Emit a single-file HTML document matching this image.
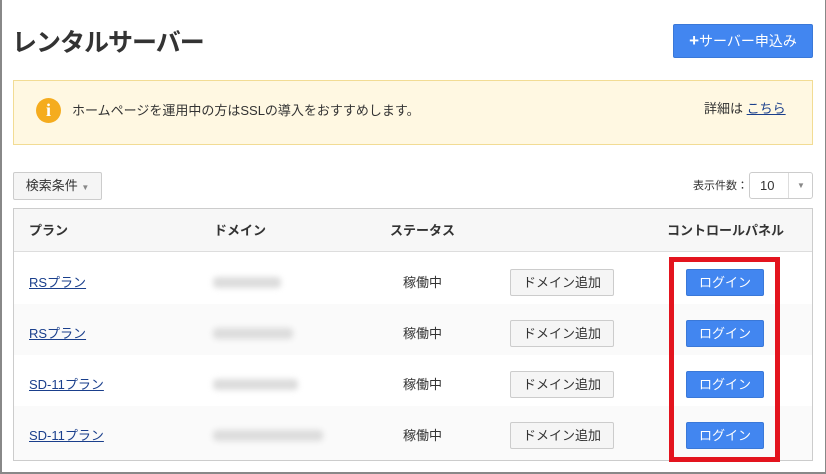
<!DOCTYPE html>
<html><head><meta charset="utf-8"><style>
*{box-sizing:border-box;margin:0;padding:0}
body{width:826px;height:474px;background:#fff;font-family:"Liberation Sans","Noto Sans CJK JP",sans-serif;color:#333;position:relative;overflow:hidden;font-size:13px;line-height:1.2}
.frame{position:absolute;left:0;top:0;width:826px;height:474px;border-left:2px solid #888;border-right:1px solid #888;border-bottom:2px solid #888}
.a{position:absolute}
h1{position:absolute;left:12px;top:28px;font-size:25px;font-weight:bold;color:#333;letter-spacing:-1px;line-height:1.2}
.apply{left:673px;top:24px;width:140px;height:34px;background:#4286f0;border:1px solid #3a78d8;color:#fff;font-size:14px;text-align:center;line-height:32px;border-radius:2px}
.alert{left:13px;top:80px;width:800px;height:65px;background:#fff8e2;border:1px solid #f2dc94}
.ic{left:36px;top:98px;width:25px;height:25px;border-radius:50%;background:#f5ac1e;color:#fff;font-family:"Liberation Serif",serif;font-weight:bold;font-size:18px;text-align:center;line-height:25px}
.btn{background:#f5f5f5;border:1px solid #ccc;border-radius:2px;color:#333;text-align:center}
.tbl{left:13px;top:208px;width:800px;height:253px;border:1px solid #ccc}
.hdr{left:14px;top:209px;width:798px;height:43px;background:#f7f7f7;border-bottom:1px solid #ddd}
.hd{top:223px;font-size:13px;font-weight:bold;color:#333}
.row{left:14px;width:798px;height:51px}
.lnk{color:#1a3f8c;text-decoration:underline;font-size:13px}
.blur{height:11px;background:#dcdcdc;filter:blur(3px);border-radius:4px}
.login{width:78px;height:27px;background:#4286f0;border:1px solid #3a78d8;color:#fff;text-align:center;line-height:25px;font-size:13px;border-radius:2px}
.add{width:104px;height:27px;line-height:25px;font-size:13px}
.red{left:669px;top:257px;width:111px;height:205px;border:5px solid #e3141e}
</style></head><body>
<div class="frame"></div>
<h1>レンタルサーバー</h1>
<div class="a apply"><b style="font-size:17px">+</b>サーバー申込み</div>
<div class="a alert"></div>
<div class="a ic">i</div>
<div class="a" style="left:72px;top:103px;font-size:13px">ホームページを運用中の方はSSLの導入をおすすめします。</div>
<div class="a" style="left:704px;top:101px;font-size:13px">詳細は <span class="lnk">こちら</span></div>
<div class="a btn" style="left:13px;top:172px;width:89px;height:28px;line-height:26px">検索条件 <span style="font-size:8px;color:#888">▼</span></div>
<div class="a" style="left:693px;top:180px;font-size:11px">表示件数：</div>
<div class="a" style="left:749px;top:172px;width:64px;height:27px;border:1px solid #ccc;border-radius:3px;background:#fff"><span style="position:absolute;left:10px;top:5px;font-size:13px">10</span><span style="position:absolute;left:38px;top:0;height:25px;border-left:1px solid #ddd;width:25px;text-align:center;line-height:25px;font-size:8px;color:#888">▼</span></div>
<div class="a tbl"></div>
<div class="a hdr"></div>
<div class="a hd" style="left:29px">プラン</div>
<div class="a hd" style="left:214px">ドメイン</div>
<div class="a hd" style="left:390px">ステータス</div>
<div class="a hd" style="left:667px">コントロールパネル</div>

<div class="a row" style="top:253px;background:#fff"></div>
<div class="a row" style="top:304px;background:#fafafa"></div>
<div class="a row" style="top:355px;background:#fff"></div>
<div class="a row" style="top:406px;background:#fafafa;height:54px"></div>

<div class="a lnk" style="left:29px;top:275px">RSプラン</div>
<div class="a lnk" style="left:29px;top:326px">RSプラン</div>
<div class="a lnk" style="left:29px;top:377px">SD-11プラン</div>
<div class="a lnk" style="left:29px;top:428px">SD-11プラン</div>

<div class="a blur" style="left:213px;top:277px;width:68px"></div>
<div class="a blur" style="left:213px;top:328px;width:80px"></div>
<div class="a blur" style="left:213px;top:379px;width:85px"></div>
<div class="a blur" style="left:213px;top:430px;width:110px"></div>

<div class="a" style="left:403px;top:275px">稼働中</div>
<div class="a" style="left:403px;top:326px">稼働中</div>
<div class="a" style="left:403px;top:377px">稼働中</div>
<div class="a" style="left:403px;top:428px">稼働中</div>

<div class="a btn add" style="left:510px;top:269px">ドメイン追加</div>
<div class="a btn add" style="left:510px;top:320px">ドメイン追加</div>
<div class="a btn add" style="left:510px;top:371px">ドメイン追加</div>
<div class="a btn add" style="left:510px;top:422px">ドメイン追加</div>

<div class="a login" style="left:686px;top:269px">ログイン</div>
<div class="a login" style="left:686px;top:320px">ログイン</div>
<div class="a login" style="left:686px;top:371px">ログイン</div>
<div class="a login" style="left:686px;top:422px">ログイン</div>
<div class="a red"></div>
</body></html>
